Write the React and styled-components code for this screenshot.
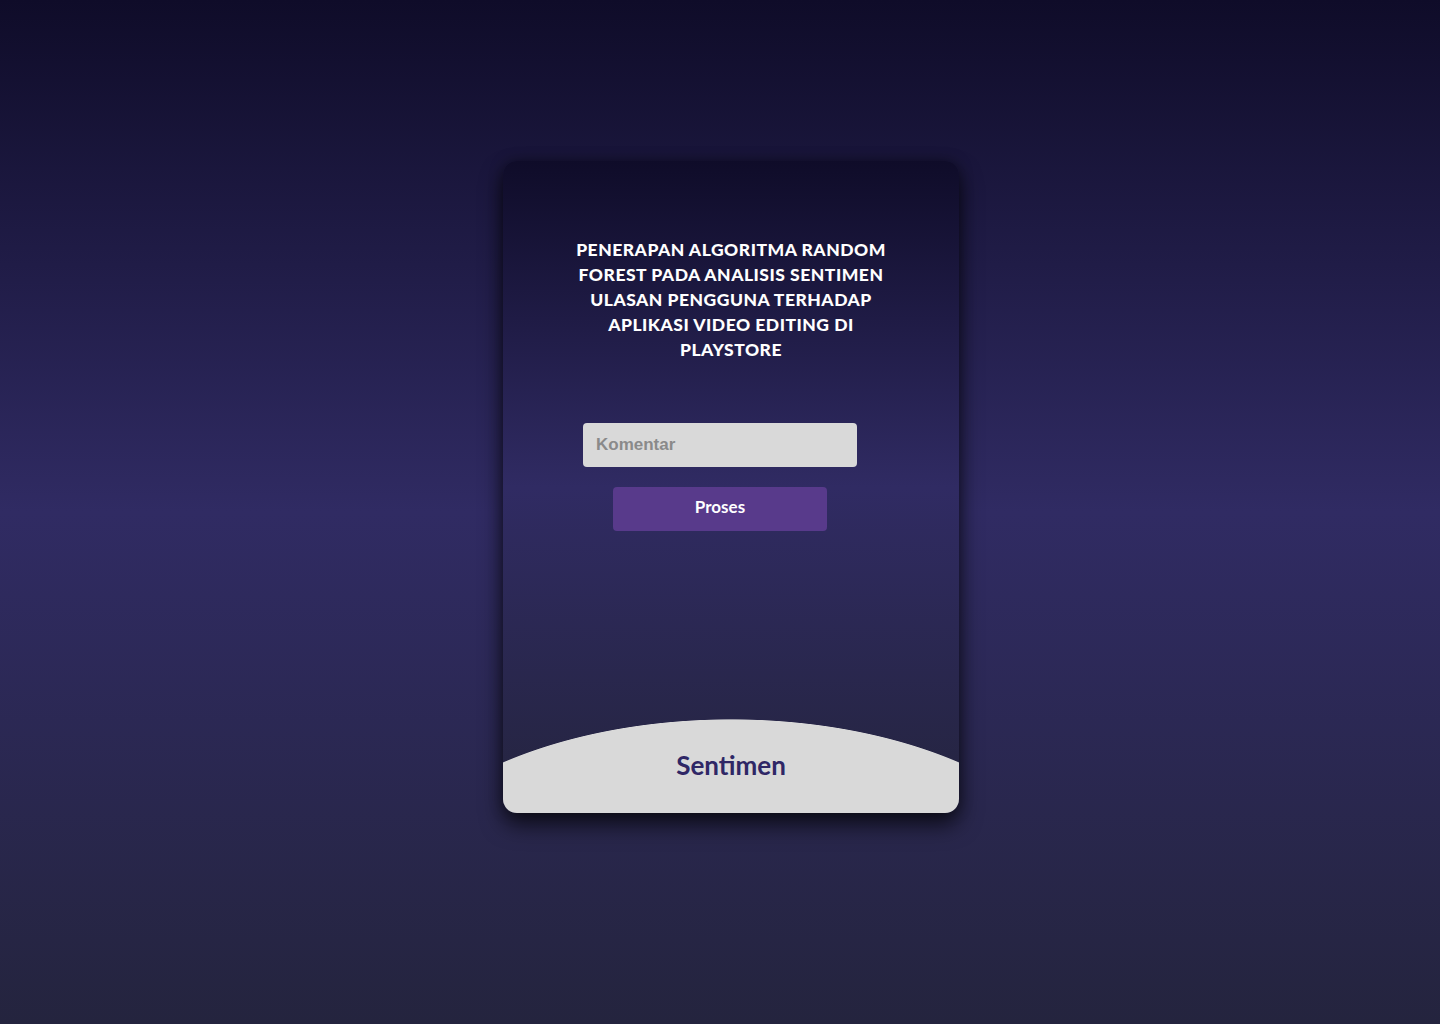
import React, { useState } from 'react';
import styled, { createGlobalStyle } from 'styled-components';

const GlobalStyle = createGlobalStyle`
  * { box-sizing: border-box; }
  html, body { margin: 0; padding: 0; }
  body {
    min-height: 100vh;
    background: linear-gradient(to bottom, #0f0c29, #302b63, #24243e);
    font-family: Lato, "Noto Sans", sans-serif;
  }
`;

const Page = styled.div`
  min-height: 100vh;
  display: flex;
  justify-content: center;
  padding: 161px 0 0 22px;
`;

const Card = styled.div`
  width: 456px;
  height: 652px;
  display: flex;
  flex-direction: column;
  align-items: center;
  border-radius: 14px;
  overflow: hidden;
  background: linear-gradient(to bottom, #0f0c29, #302b63, #24243e);
  box-shadow: 0 12px 22px rgba(0, 0, 0, 0.65), 0 0 14px rgba(0, 0, 0, 0.35);
`;

const Title = styled.h1`
  margin: 76px 0 0;
  color: #ffffff;
  font-family: Lato, "Noto Sans", sans-serif;
  font-weight: 900;
  font-size: 17.5px;
  line-height: 25px;
  letter-spacing: 0.5px;
  text-transform: uppercase;
  text-align: center;
`;

const Form = styled.form`
  margin-top: 61px;
  display: flex;
  flex-direction: column;
  align-items: center;
  gap: 20px;
  margin-left: -22px;
`;

const Input = styled.input`
  width: 274px;
  height: 44px;
  border: none;
  border-radius: 4px;
  background: #d9d9d9;
  padding: 0 13px;
  font-family: "Liberation Sans", Arial, sans-serif;
  font-weight: 700;
  font-size: 17px;
  color: #333;
  outline: none;

  &::placeholder {
    color: #8a8a8a;
  }
`;

const Button = styled.button`
  width: 214px;
  height: 44px;
  border: none;
  border-radius: 4px;
  padding: 0 0 5px;
  background: #583a8b;
  color: #ffffff;
  font-family: Lato, "Noto Sans", sans-serif;
  font-weight: 700;
  font-size: 17px;
  cursor: pointer;
`;

const Footer = styled.div`
  margin-top: auto;
  width: 100%;
  height: 94px;
  display: flex;
  justify-content: center;
  padding-top: 31px;
  background: radial-gradient(
    ellipse 365px 196px at 50% 196px,
    #d9d9d9 99.6%,
    rgba(217, 217, 217, 0) 100%
  );
`;

const FooterLabel = styled.span`
  color: #2f2766;
  font-family: Lato, "Noto Sans", sans-serif;
  font-weight: 700;
  font-size: 26px;
  line-height: 30px;
`;

export default function App() {
  const [komentar, setKomentar] = useState('');

  return (
    <>
      <GlobalStyle />
      <Page>
        <Card>
          <Title>
            Penerapan Algoritma Random
            <br />
            Forest pada Analisis Sentimen
            <br />
            Ulasan Pengguna terhadap
            <br />
            Aplikasi Video Editing di
            <br />
            Playstore
          </Title>
          <Form onSubmit={(e) => e.preventDefault()}>
            <Input
              type="text"
              placeholder="Komentar"
              value={komentar}
              onChange={(e) => setKomentar(e.target.value)}
            />
            <Button type="submit">Proses</Button>
          </Form>
          <Footer>
            <FooterLabel>Sentimen</FooterLabel>
          </Footer>
        </Card>
      </Page>
    </>
  );
}
